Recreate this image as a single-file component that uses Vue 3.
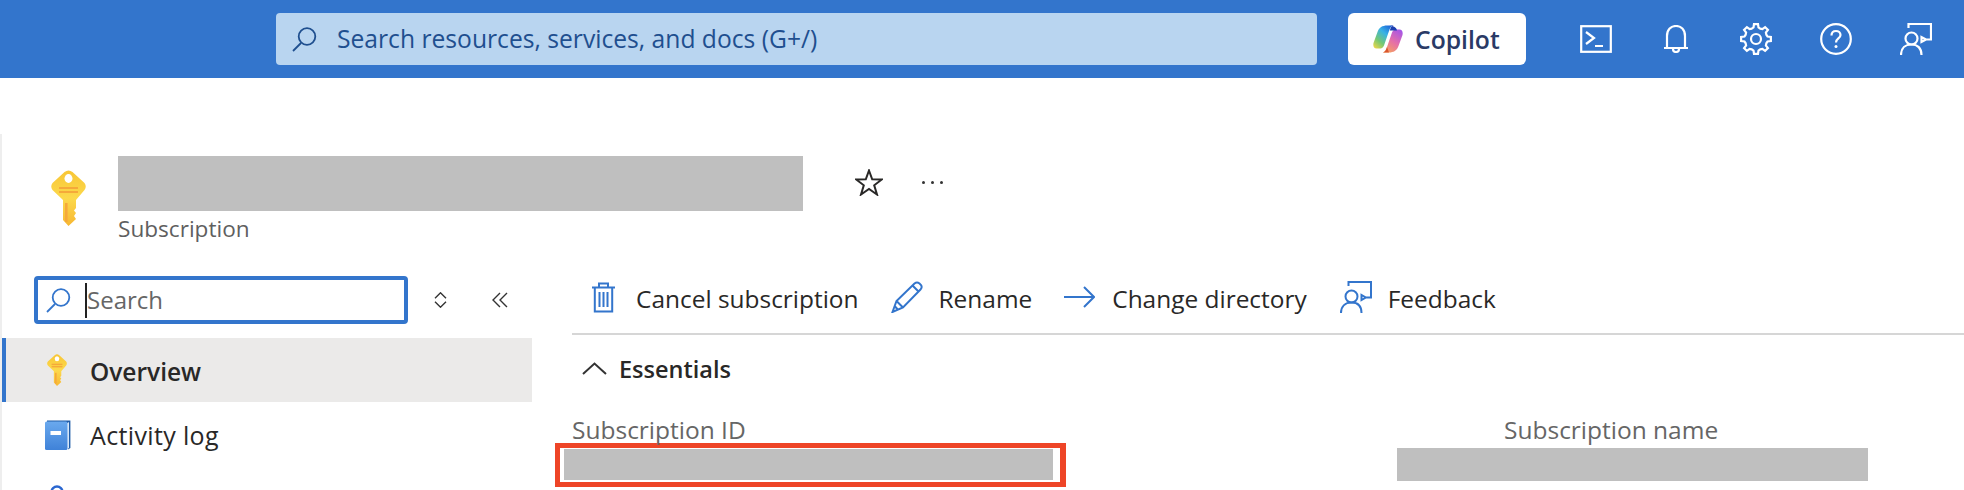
<script setup>
const navItems = [
  { label: 'Overview', icon: 'key', active: true },
  { label: 'Activity log', icon: 'book', active: false },
  { label: 'Access control (IAM)', icon: 'person', active: false }
]

// cog outline for the settings button
const gearPath = (() => {
  const teeth = 8
  const cx = 16
  const cy = 16
  let d = ''
  for (let i = 0; i < teeth; i++) {
    const a = (i / teeth) * Math.PI * 2 - Math.PI / 2
    const step = (Math.PI * 2) / teeth
    const pts = [
      [11.2, a - step * 0.5],
      [11.8, a - step * 0.27],
      [15, a - step * 0.17],
      [15, a + step * 0.17],
      [11.8, a + step * 0.27]
    ]
    pts.forEach(([r, t], idx) => {
      const x = (cx + r * Math.cos(t)).toFixed(2)
      const y = (cy + r * Math.sin(t)).toFixed(2)
      d += `${i === 0 && idx === 0 ? 'M' : 'L'}${x} ${y} `
    })
  }
  return d + 'Z'
})()
</script>

<template>
  <div class="page">
    <header class="topbar">
      <div class="global-search">
        <svg class="search-icon" viewBox="0 0 25 25" width="25" height="25">
          <circle cx="15" cy="9.5" r="8.3" fill="none" stroke="#1f4f8f" stroke-width="1.8" />
          <path d="M9 16 L1 24" stroke="#1f4f8f" stroke-width="1.8" fill="none" />
        </svg>
        <span>Search resources, services, and docs (G+/)</span>
      </div>

      <button class="copilot">
        <svg viewBox="0 0 30 28" width="30" height="28">
          <defs>
            <linearGradient id="copilotLeft" x1="0.85" y1="0" x2="0.1" y2="1">
              <stop offset="0" stop-color="#1c5ed8" />
              <stop offset="0.35" stop-color="#38b2e6" />
              <stop offset="0.7" stop-color="#74c874" />
              <stop offset="1" stop-color="#ead64a" />
            </linearGradient>
            <linearGradient id="copilotRight" x1="0.8" y1="0" x2="0.2" y2="1">
              <stop offset="0" stop-color="#a856e6" />
              <stop offset="0.5" stop-color="#e56fa8" />
              <stop offset="1" stop-color="#f7a45c" />
            </linearGradient>
          </defs>
          <path d="M14 .5H21C18 .5 17 3 16 6L11 20.5C10 23 8.5 23.5 6 23.5H3.5C1 23.5-.2 21 .5 18L4.5 7C6 2.5 9.5 .5 14 .5Z" fill="url(#copilotLeft)" />
          <path d="M16 27.5H9C12 27.5 13 25 14 22L19 7.5C20 5 21.5 4.5 24 4.5H26.5C29 4.5 30.2 7 29.5 10L25.5 21C24 25.5 20.5 27.5 16 27.5Z" fill="url(#copilotRight)" />
          <path d="M15 .5H21C19.5 .5 18.5 1.2 17.8 2.5L16.8 5.5H24C23.5 2 20 .5 15 .5Z" fill="#1d3fb0" />
          <path d="M9 27.5H16L14 22C13 25 12 27.5 9 27.5Z" fill="#d9562e" />
        </svg>
        <span>Copilot</span>
      </button>

      <div class="top-actions">
        <svg viewBox="0 0 32 28" width="32" height="28" class="top-icon">
          <rect x="1.2" y="1.2" width="29.6" height="25.6" />
          <path d="M6 7 L14 13 L6 19 M15 21 H23" />
        </svg>
        <svg viewBox="0 0 24 28" width="24" height="28" class="top-icon bell">
          <path d="M3 23 V11 C3 4.5 7 1 12 1 C17 1 21 4.5 21 11 V23 M0 23 H24 M9 24 C9 28 15 28 15 24" />
        </svg>
        <svg viewBox="0 0 32 32" width="32" height="32" class="top-icon gear">
          <path :d="gearPath" />
          <circle cx="16" cy="16" r="5" />
        </svg>
        <svg viewBox="0 0 32 32" width="32" height="32" class="top-icon help">
          <circle cx="16" cy="16" r="14.8" />
          <path d="M11.5 12.5 C11.5 9.5 13.5 8 16 8 C18.5 8 20.5 9.8 20.5 12 C20.5 15.5 16 15.5 16 19.5" />
          <circle class="dot" cx="16" cy="23.5" r="1.5" />
        </svg>
        <svg viewBox="0 0 32 32" width="32" height="32" class="top-icon">
          <path d="M8.5 5 V1 H31 V16.5 H26 L21.5 19 V14 L26 16.5" />
          <circle cx="11.5" cy="15.5" r="6" />
          <path d="M1 32 C1 25 5.5 21.5 11.5 21.5 C17.5 21.5 21.5 25 21.5 32" />
        </svg>
      </div>
    </header>

    <main class="blade">
      <div class="title-row">
        <svg class="title-key" viewBox="0 0 35 56" width="35" height="56">
          <defs>
            <linearGradient id="keyFill" x1="0" y1="0" x2="0" y2="1">
              <stop offset="0" stop-color="#f8c636" />
              <stop offset="0.5" stop-color="#fcd94c" />
              <stop offset="1" stop-color="#f7b733" />
            </linearGradient>
          </defs>
          <path d="M13.5 2Q17.5-1 21.5 2L33.5 13Q36 16.5 33.5 20L25 30V38L23 40.5L25 43L23 46L25 49L17.5 56L12 50V30L1.5 20Q-1 16.5 1.5 13Z" fill="url(#keyFill)" />
          <ellipse cx="17.5" cy="8.5" rx="4" ry="4.4" fill="#fff" />
          <rect x="8" y="17" width="19" height="2" fill="#f5a93a" />
          <rect x="8" y="21" width="19" height="2" fill="#f5a93a" />
          <rect x="14" y="33" width="2.6" height="19" fill="#f5a93a" />
        </svg>
        <div class="title-text">
          <div class="redacted title-redacted"></div>
          <div class="subtitle">Subscription</div>
        </div>
        <svg class="star" viewBox="0 0 28 27" width="28" height="27">
          <path d="M14 1.5 L17.2 10.3 L26.8 10.5 L19.2 16.3 L22 25.5 L14 20 L6 25.5 L8.8 16.3 L1.2 10.5 L10.8 10.3 Z" fill="none" stroke="#292827" stroke-width="2" />
        </svg>
        <div class="more"><i></i><i></i><i></i></div>
      </div>

      <div class="blade-body">
        <aside class="sidebar">
          <div class="side-tools">
            <div class="side-search">
              <svg viewBox="0 0 25 25" width="25" height="25">
                <circle cx="15" cy="9.5" r="8.3" fill="none" stroke="#3375cc" stroke-width="1.8" />
                <path d="M9 16 L1 24" stroke="#3375cc" stroke-width="1.8" fill="none" />
              </svg>
              <span class="caret"></span>
              <span class="placeholder">Search</span>
            </div>
            <svg class="tool updown" viewBox="0 0 13 16" width="13" height="16">
              <path d="M1 6.2 L6.5 .8 L12 6.2 M1 9.8 L6.5 15.2 L12 9.8" />
            </svg>
            <svg class="tool collapse" viewBox="0 0 16 16" width="16" height="16">
              <path d="M8 1 L1 8 L8 15 M15 1 L8 8 L15 15" />
            </svg>
          </div>

          <nav class="nav">
            <div v-for="item in navItems" :key="item.label" class="nav-item" :class="{ active: item.active }">
              <span class="nav-icon">
                <svg v-if="item.icon === 'key'" viewBox="0 0 35 56" width="20" height="32">
                  <path d="M13.5 2Q17.5-1 21.5 2L33.5 13Q36 16.5 33.5 20L25 30V38L23 40.5L25 43L23 46L25 49L17.5 56L12 50V30L1.5 20Q-1 16.5 1.5 13Z" fill="url(#keyFill)" />
                  <ellipse cx="17.5" cy="8.5" rx="4" ry="4.4" fill="#fff" />
                  <rect x="8" y="17" width="19" height="2.4" fill="#f5a93a" />
                  <rect x="8" y="21" width="19" height="2.4" fill="#f5a93a" />
                  <rect x="14" y="33" width="2.8" height="19" fill="#f5a93a" />
                </svg>
                <svg v-else-if="item.icon === 'book'" viewBox="0 0 26 30" width="26" height="30">
                  <defs>
                    <linearGradient id="bookFill" x1="0" y1="0" x2="0" y2="1">
                      <stop offset="0" stop-color="#6aa9ee" />
                      <stop offset="1" stop-color="#3f82d8" />
                    </linearGradient>
                  </defs>
                  <path d="M2 0.6 H25.4 V28 L23 29.4 V3 H2 Z" fill="#1f5ca8" />
                  <path d="M24 2 V28 L22.5 29 V3 Z" fill="#d5e6f8" />
                  <rect x="0" y="1.5" width="22.5" height="28.5" rx="1.5" fill="url(#bookFill)" />
                  <rect x="5.5" y="11" width="10.5" height="4" fill="#fff" />
                </svg>
                <svg v-else viewBox="0 0 26 30" width="26" height="30" class="person">
                  <circle cx="12" cy="7" r="5.5" />
                  <path d="M2 28 C2 19 7 15 12 15 C17 15 22 19 22 28" />
                </svg>
              </span>
              <span class="nav-label">{{ item.label }}</span>
            </div>
          </nav>
        </aside>

        <section class="content">
          <div class="command-bar">
            <button class="cmd cmd-cancel">
              <svg viewBox="0 0 23 31" width="23" height="31">
                <path d="M0 5.5 H23 M7 5.5 V1.5 H16 V5.5 M2.8 5.5 V29.6 H20.2 V5.5 M7.5 10 V25 M11.5 10 V25 M15.5 10 V25" />
              </svg>
              <span>Cancel subscription</span>
            </button>
            <button class="cmd cmd-rename">
              <svg viewBox="0 0 32 32" width="32" height="32">
                <path d="M1.5 31 L5.5 20 L23.5 2.5 Q26 .6 28.5 2.5 L30 4 Q31.5 6.5 29.5 8.5 L12 26.5 Z M5.5 20 L12 26.5 M21.5 4.5 L27.5 10.5 M3.6 25 L7 28.7" />
              </svg>
              <span>Rename</span>
            </button>
            <button class="cmd cmd-move">
              <svg viewBox="0 0 31 22" width="31" height="22">
                <path d="M0 11 H29.5 M20 1 L30 11 L20 21" />
              </svg>
              <span>Change directory</span>
            </button>
            <button class="cmd">
              <svg viewBox="0 0 32 32" width="32" height="32">
                <path d="M8.5 5 V1 H31 V16.5 H26 L21.5 19 V14 L26 16.5" />
                <circle cx="11.5" cy="15.5" r="6" />
                <path d="M1 32 C1 25 5.5 21.5 11.5 21.5 C17.5 21.5 21.5 25 21.5 32" />
              </svg>
              <span>Feedback</span>
            </button>
          </div>

          <div class="essentials">
            <svg viewBox="0 0 25 13" width="25" height="13">
              <path d="M1 12 L12.5 1.5 L24 12" fill="none" stroke="#333" stroke-width="2" />
            </svg>
            <span>Essentials</span>
          </div>

          <div class="fields">
            <div class="field field-id">
              <div class="field-label">Subscription ID</div>
              <div class="id-box">
                <div class="redacted"></div>
              </div>
            </div>
            <div class="field field-name">
              <div class="field-label">Subscription name</div>
              <div class="redacted name-redacted"></div>
            </div>
          </div>
        </section>
      </div>
    </main>
  </div>
</template>

<style scoped>
.page {
  width: 1964px;
  height: 490px;
  overflow: hidden;
  background: #fff;
  font-family: "Open Sans", "Noto Sans", sans-serif;
  font-size: 24px;
  color: #292827;
}

.topbar {
  height: 78px;
  background: #3375cc;
  display: flex;
  align-items: center;
  padding-left: 276px;
  box-sizing: border-box;
}

.global-search {
  width: 1041px;
  height: 52px;
  background: #b9d5f0;
  border-radius: 4px;
  display: flex;
  align-items: center;
  padding-left: 16px;
  box-sizing: border-box;
  color: #1f4f8f;
  font-size: 24.65px;
}

.global-search span {
  margin-top: -2px;
}

.search-icon {
  margin-right: 20px;
}

.copilot {
  width: 178px;
  height: 52px;
  margin-left: 31px;
  border: none;
  border-radius: 6px;
  background: #fff;
  display: flex;
  align-items: center;
  gap: 12px;
  padding: 0 0 0 25px;
  font-family: inherit;
  font-size: 24.7px;
  font-weight: 600;
  color: #2a3a66;
}

.top-actions {
  display: flex;
  align-items: center;
  margin-left: 54px;
}

.top-icon {
  fill: none;
  stroke: #fff;
  stroke-width: 2.2;
  flex: none;
}

.top-icon .dot {
  fill: #fff;
  stroke: none;
}

.bell { margin-left: 52px; }
.gear { margin-left: 52px; }
.help { margin-left: 48px; }
.help + svg { margin-left: 48px; }

.blade {
  margin-top: 56px;
  height: 356px;
  border-left: 2px solid #eeeeee;
  padding-top: 22px;
  box-sizing: border-box;
  overflow: hidden;
}

.title-row {
  display: flex;
  align-items: flex-start;
  padding-left: 49px;
  height: 87px;
}

.title-key {
  margin-top: 14px;
  margin-right: 32px;
}

.title-redacted {
  width: 685px;
  height: 55px;
}

.subtitle {
  font-size: 22.6px;
  line-height: 36px;
  color: #5f5f5f;
}

.star {
  margin-left: 52px;
  margin-top: 13px;
}

.more {
  display: flex;
  gap: 6px;
  margin-left: 39px;
  margin-top: 25px;
}

.more i {
  width: 3px;
  height: 3px;
  border-radius: 50%;
  background: #333;
}

.redacted {
  background: #bfbfbf;
}

.blade-body {
  display: flex;
}

.sidebar {
  width: 530px;
  flex: none;
  padding-top: 33px;
}

.side-tools {
  display: flex;
  align-items: center;
  padding-left: 32px;
}

.side-search {
  width: 374px;
  height: 48px;
  border: 4px solid #3375cc;
  border-radius: 4px;
  display: flex;
  align-items: center;
  padding-left: 8px;
  box-sizing: border-box;
  flex: none;
}

.caret {
  width: 2px;
  height: 35px;
  background: #222;
  margin-left: 14px;
  flex: none;
}

.placeholder {
  color: #666;
  margin-top: -2px;
}

.tool {
  fill: none;
  stroke: #333;
  stroke-width: 1.4;
}

.updown { margin-left: 26px; }
.collapse { margin-left: 45px; }

.nav {
  margin-top: 14px;
  display: flex;
  flex-direction: column;
  gap: 1px;
}

.nav-item {
  height: 64px;
  display: flex;
  align-items: center;
  padding-left: 43px;
  border-left: 4px solid transparent;
  box-sizing: border-box;
  font-size: 25px;
  letter-spacing: 0.35px;
}

.nav-item.active {
  background: #ebeae9;
  border-left-color: #3375cc;
  font-size: 24.5px;
  font-weight: 600;
  letter-spacing: 0;
}

.nav-item.active .nav-label {
  padding-top: 2px;
}

.nav-icon {
  width: 45px;
  display: flex;
  justify-content: flex-start;
  flex: none;
  margin-left: -4px;
}

.nav-item.active .nav-icon {
  padding-left: 2px;
  box-sizing: border-box;
}

.person {
  fill: none;
  stroke: #2a66d0;
  stroke-width: 2.4;
}

.content {
  flex: 1;
  margin-left: 40px;
}

.command-bar {
  height: 92px;
  padding: 18px 0 0 20px;
  border-bottom: 2px solid #d6d6d6;
  box-sizing: border-box;
  display: flex;
  align-items: center;
  gap: 33px;
}

.cmd {
  display: flex;
  align-items: center;
  gap: 16px;
  border: none;
  background: none;
  padding: 0;
  font-family: inherit;
  font-size: 24.45px;
  color: #292827;
}

.cmd span {
  padding-top: 2px;
}

.cmd svg {
  fill: none;
  stroke: #3375cc;
  stroke-width: 2;
  flex: none;
}

.cmd-cancel {
  gap: 21px;
}

.cmd-rename {
  margin-left: -1px;
}

.cmd-move {
  gap: 17px;
  margin-left: -1px;
}

.essentials {
  height: 66px;
  display: flex;
  align-items: center;
  gap: 12px;
  padding-left: 10px;
  font-size: 23.5px;
  font-weight: 600;
}

.essentials span {
  padding-top: 2px;
}

.fields {
  display: flex;
  margin-top: 13px;
}

.field-id {
  width: 825px;
  flex: none;
}

.field-label {
  font-size: 24.5px;
  line-height: 26px;
  padding-top: 3px;
  color: #666;
}

.id-box {
  width: 511px;
  height: 44px;
  margin-left: -17px;
  border: 5px solid #ee4527;
  border-right-width: 6px;
  padding: 1px 7px 2px 4px;
  box-sizing: border-box;
}

.id-box .redacted {
  height: 100%;
}

.field-name .field-label {
  padding-left: 107px;
}

.name-redacted {
  width: 471px;
  height: 33px;
  margin-top: 5px;
}
</style>
